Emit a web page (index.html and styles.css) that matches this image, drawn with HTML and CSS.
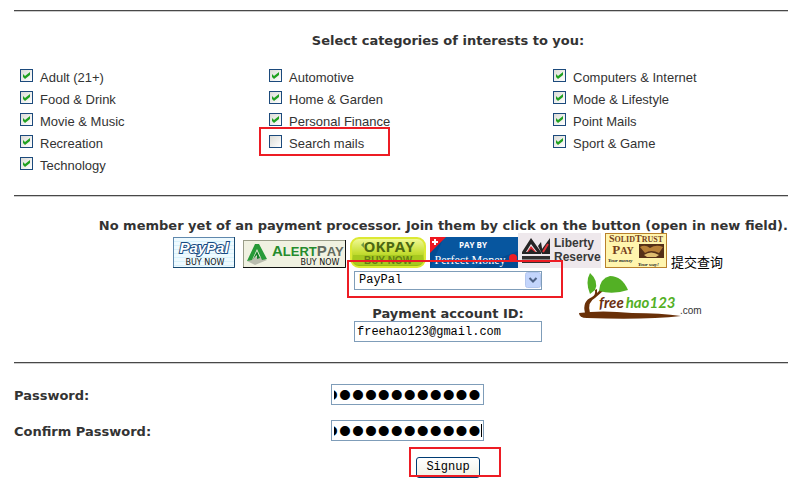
FILE: index.html
```html
<!DOCTYPE html>
<html lang="en">
<head>
<meta charset="utf-8">
<title>Signup</title>
<link rel="stylesheet" href="styles.css">
</head>
<body>
<form class="signup">
  <hr>
  <section class="interests">
    <h2 class="title centered">Select categories of interests to you:</h2>
    <div class="categories">
      <div class="column">
        <label class="option"><input type="checkbox" checked>Adult (21+)</label>
        <label class="option"><input type="checkbox" checked>Food &amp; Drink</label>
        <label class="option"><input type="checkbox" checked>Movie &amp; Music</label>
        <label class="option"><input type="checkbox" checked>Recreation</label>
        <label class="option"><input type="checkbox" checked>Technology</label>
      </div>
      <div class="column">
        <label class="option"><input type="checkbox" checked>Automotive</label>
        <label class="option"><input type="checkbox" checked>Home &amp; Garden</label>
        <label class="option"><input type="checkbox" checked>Personal Finance</label>
        <label class="option marked marked-option"><input type="checkbox">Search mails</label>
      </div>
      <div class="column">
        <label class="option"><input type="checkbox" checked>Computers &amp; Internet</label>
        <label class="option"><input type="checkbox" checked>Mode &amp; Lifestyle</label>
        <label class="option"><input type="checkbox" checked>Point Mails</label>
        <label class="option"><input type="checkbox" checked>Sport &amp; Game</label>
      </div>
    </div>
  </section>
  <hr>
  <section class="payment centered">
    <p class="title notice">No member yet of an payment processor. Join them by click on the button (open in new field).</p>
    <div class="badges">
      <a class="badge" href="#">
        <svg width="62" height="31" viewBox="0 0 62 31">
          <rect x=".5" y=".5" width="61" height="30" fill="#eefaff" stroke="#5f88ad"/>
          <path d="M1 4.500H61M1 8.500H61M1 12.500H61M1 16.500H61M1 20.500H61M1 24.500H61M1 28.500H61" stroke="#d8f1fb"/>
          <path d="M0 30.500H61.500V0" fill="none" stroke="#16476f"/>
          <text x="31" y="16" class="paypal-name">PayPal</text>
          <text x="32" y="28" class="buy-now">BUY NOW</text>
        </svg>
      </a>
      <a class="badge badge-alertpay" href="#">
        <svg width="103" height="28" viewBox="0 0 103 28">
          <rect x=".5" y=".5" width="102" height="27" fill="#f0f1e1" stroke="#9a9d89"/>
          <path d="M0 27.500H102.500V0" fill="none" stroke="#111"/>
          <path d="M4 21 15 16 24 20 12 25Z" fill="#b9bcae"/>
          <path d="M4 21 12 4 16 4 24 19 19 20 14 9 9 20Z" fill="#279a38"/>
          <path d="M10 19 14 11 17 18 14 19 14 15Z" fill="#168029"/>
          <text x="29" y="16" class="alert-name"><tspan fill="#258b2d">A<tspan font-size="13">LERT</tspan></tspan><tspan fill="#626a60">P<tspan font-size="13">AY</tspan></tspan></text>
          <text x="77" y="25" class="buy-now">BUY NOW</text>
        </svg>
      </a>
      <a class="badge" href="#">
        <svg width="76" height="31" viewBox="0 0 76 31">
          <defs><linearGradient id="lime" x2="0" y2="1"><stop stop-color="#f3fa9b"/><stop offset=".5" stop-color="#c7df35"/><stop offset="1" stop-color="#8fb80e"/></linearGradient></defs>
          <rect x="1" y="1" width="74" height="29" rx="8" fill="url(#lime)" stroke="#dce934" stroke-width="2"/>
          <path d="M3 18H73V23Q73 28 67 28H9Q3 28 3 23Z" fill="#a6c91f"/>
          <path d="M11 8 14 5V11Z" fill="#729c48"/>
          <text x="39" y="15" class="ok-name">OKPAY</text>
          <text x="38" y="27" class="ok-buy">BUY NOW</text>
        </svg>
      </a>
      <a class="badge" href="#">
        <svg width="88" height="31" viewBox="0 0 88 31">
          <rect width="88" height="31" fill="#034b91"/>
          <path d="M14 0H88V14L44 31H0Z" fill="#07569f"/>
          <path d="M0 0H16L0 16Z" fill="#ef1721"/>
          <path d="M5 2V8M2 5H8" stroke="#fff" stroke-width="2"/>
          <text x="43" y="11" class="pm-by">PAY BY</text>
          <text x="40" y="27" class="pm-name">Perfect Money</text>
          <circle cx="83" cy="21" r="4" fill="#ed1c24"/>
        </svg>
      </a>
      <a class="badge badge-liberty" href="#">
        <svg width="83" height="35" viewBox="0 0 83 35">
          <rect width="83" height="35" fill="#eee8ec"/>
          <path d="M4 19 13 5 23 19H19L13 11 8 19Z" fill="#252525"/>
          <path d="M9 19 13 13 18 19Z" fill="#d7262d"/>
          <path d="M4 19H10L13 16 17 19H23V21H4Z" fill="#252525"/>
          <path d="M20 13 23 9 25 21H24Z" fill="#252525"/>
          <path d="M24 16 32 5V21H24Z" fill="#252525"/>
          <path d="M25 19 30 11" stroke="#e33338" stroke-width="2"/>
          <path d="M4 23H32V30H4Z" fill="#303030"/><path d="M4 26.500H32" stroke="#888"/>
          <text x="36" y="14" class="liberty-name">Liberty</text>
          <text x="36" y="28" class="liberty-name">Reserve</text>
        </svg>
      </a>
      <a class="badge" href="#">
        <svg width="62" height="35" viewBox="0 0 62 35">
          <rect x=".5" y=".5" width="61" height="34" fill="#fff5ae" stroke="#b9812c"/>
          <text x="31" y="9" class="solid-name">S<tspan font-size="8">OLID</tspan>T<tspan font-size="8">RUST</tspan></text>
          <text x="18" y="21" class="solid-pay">P<tspan font-size="10">AY</tspan></text>
          <rect x="34" y="11" width="25" height="14" fill="#553018"/>
          <path d="M35 14Q40 11 45 15Q51 11 58 14L54 20Q46 16 40 20Z" fill="#b78038"/>
          <path d="M39 22Q46 17 54 22L51 24H42Z" fill="#dfbd70"/>
          <text x="3" y="29" class="solid-tag">Your money</text>
          <text x="33" y="33" class="solid-tag">Your way!</text>
        </svg>
      </a>
      <span class="query" lang="zh">提交查询</span>
    </div>
    <div class="processor marked marked-select">
      <select aria-label="Payment processor"><option>PayPal</option></select>
      <svg class="arrow" width="16" height="16" viewBox="0 0 16 16">
        <rect x=".5" y=".5" width="15" height="15" rx="2" fill="#c3d5fc" stroke="#b4c7ee"/>
        <path d="M4.500 6 8 9.500 11.500 6" fill="none" stroke="#4d6185" stroke-width="2"/>
      </svg>
    </div>
    <label class="title account-label" for="account">Payment account ID:</label>
    <input class="field account" id="account" type="text" value="freehao123@gmail.com">
    <svg class="watermark" width="126" height="48" viewBox="0 0 126 48">
      <path d="M6 41Q3 29 13 25Q17 23 16 18L18 17 18 21 22 17 24 19 16 26Q8 30 11 41Z" fill="#693008"/>
      <path d="M11 22Q6 10 11 1Q20 9 16 18Z" fill="#53b025"/>
      <path d="M20 19Q21 6 31 4Q43 4 49 18Q34 23 20 19Z" fill="#53b025"/>
      <path d="M0 41Q22 38 53 41Q82 41 102 44Q67 48 8 46Q0 46 0 41Z" fill="#693008"/>
      <text x="20" y="36" class="free-name">free<tspan class="hao" dx="2">hao123</tspan></text>
      <text x="101" y="42" class="free-com">.com</text>
    </svg>
  </section>
  <hr>
  <section class="security">
    <label class="title" for="password">Password:</label>
    <div class="secret"><input class="field" id="password" type="password" value="freehao12345"></div>
    <label class="title" for="confirm">Confirm Password:</label>
    <div class="secret"><input class="field" id="confirm" type="password" value="freehao12345"><span class="caret"></span></div>
  </section>
  <div class="actions centered">
    <div class="marked marked-button"><button type="button">Signup</button></div>
  </div>
</form>
</body>
</html>
```
FILE: styles.css
```css
* { box-sizing: border-box; }

body {
  margin: 0;
  background: #fff;
  color: #333;
  font: 13px/24px "Liberation Sans", Arial, sans-serif;
}

.signup { padding: 10px 0 12px 14px; }

hr {
  height: 2px;
  margin: 0;
  border: 0;
  border-top: 1px solid #484848;
  border-bottom: 1px solid #ccc;
}

.title {
  margin: 0;
  font: bold 13px/18px "DejaVu Sans", Verdana, sans-serif;
  white-space: nowrap;
}

.centered {
  display: flex;
  flex-direction: column;
  align-items: center;
  padding-left: 94px;
}

/* Interests */
.interests { padding: 20px 0 19px; }

.categories {
  display: grid;
  grid-template-columns: 249fr 284fr 235fr;
  padding: 16px 0 0 6px;
}

.column {
  display: flex;
  flex-direction: column;
  align-items: flex-start;
}

.option {
  display: flex;
  gap: 7px;
  height: 22px;
}

.option input {
  appearance: none;
  width: 13px;
  height: 13px;
  margin: 3px 0 0;
  border: 1px solid #1c4a7c;
  background: linear-gradient(135deg, #dcdcd7, #fff);
}

.option input:checked::before {
  content: "";
  display: block;
  width: 11px;
  height: 11px;
  background: #21a121;
  clip-path: polygon(2px 4px, 4px 6px, 9px 2px, 9px 5px, 4px 9px, 2px 7px);
}

/* Red frames around the fields to notice */
.marked { position: relative; }

.marked::after {
  content: "";
  position: absolute;
  box-sizing: border-box;
  border: 2px solid #ed1c24;
  pointer-events: none;
}

.marked-option::after { left: -10px; top: -5px; width: 131px; height: 29px; }
.marked-select::after { left: -7px; top: -11px; width: 216px; height: 38px; }
.marked-button::after { left: -7px; top: -10px; width: 92px; height: 30px; }

/* Payment */
.payment {
  position: relative;
  padding-top: 20px;
  padding-bottom: 20px;
}

.notice { align-self: flex-end; }

.badges {
  display: flex;
  align-items: flex-end;
  gap: 4px;
  height: 33px;
}

.badge svg { display: block; }
.badge-alertpay { margin-left: 4px; }
.badge-liberty { margin-left: -4px; }

.query {
  color: #000;
  font: 13px/13px "Noto Sans CJK SC", sans-serif;
}

.processor {
  width: 188px;
  height: 19px;
  margin-top: 3px;
}

.processor select {
  display: block;
  appearance: none;
  width: 100%;
  height: 100%;
  padding: 0 20px 0 4px;
  border: 1px solid #7f9db9;
  border-radius: 0;
  background: #fff;
  color: #000;
  font: 12px/17px "Liberation Mono", monospace;
}

.arrow {
  position: absolute;
  right: 1px;
  top: 1px;
  pointer-events: none;
}

.account-label {
  margin-top: 16px;
  line-height: 15px;
}

.field {
  display: block;
  height: 21px;
  padding: 0 2px;
  border: 1px solid #7f9db9;
  background: #fff;
  color: #000;
  font: 12px/19px "Liberation Mono", monospace;
}

.account { width: 188px; }

.watermark {
  position: absolute;
  left: 565px;
  top: 75px;
}

/* Passwords */
.security {
  display: grid;
  grid-template-columns: 317px 1fr;
  row-gap: 15px;
  align-items: end;
  padding: 20px 0 16px;
}

.secret {
  position: relative;
  width: 153px;
}

.secret .field {
  width: 100%;
  direction: rtl;
  font: 37px/19px "Liberation Sans", sans-serif;
}

.caret {
  position: absolute;
  right: 2px;
  top: 4px;
  width: 1px;
  height: 13px;
  background: #000;
}

button {
  display: block;
  width: 64px;
  height: 21px;
  padding: 0;
  border: 1px solid #003c74;
  border-radius: 3px;
  background: linear-gradient(#fff, #f0f0e6);
  color: #000;
  font: 12px/19px "Liberation Mono", monospace;
}

/* Badge lettering */
.paypal-name {
  fill: #fff;
  stroke: #174a82;
  stroke-width: 2px;
  paint-order: stroke;
  font: italic bold 15px "Liberation Sans", sans-serif;
  text-anchor: middle;
}
.buy-now { fill: #111; font: 8px "DejaVu Sans", sans-serif; text-anchor: middle; }
.alert-name { font: bold 15px "Liberation Sans", sans-serif; }
.ok-name { fill: #4d6813; font: bold 15px "Open Sans", sans-serif; text-anchor: middle; }
.ok-buy { fill: #647f13; font: bold 10px "Liberation Sans", sans-serif; text-anchor: middle; }
.pm-by { fill: #fff; font: bold 8px "Open Sans", sans-serif; text-anchor: middle; }
.pm-name { fill: #fff; font: 12px "Liberation Serif", serif; text-anchor: middle; }
.liberty-name { fill: #383838; font: bold 12px "Liberation Sans", sans-serif; }
.solid-name { fill: #76401c; font: bold 10px "Liberation Serif", serif; text-anchor: middle; }
.solid-pay { fill: #76401c; font: bold 13px "Liberation Serif", serif; text-anchor: middle; }
.solid-tag { fill: #222; font: italic bold 5px "Liberation Serif", serif; }
.free-name { fill: #6b3010; font: italic bold 15px Lato, sans-serif; }
.hao { fill: #53b025; }
.free-com { fill: #333; font: 10px "Liberation Sans", sans-serif; }
```
